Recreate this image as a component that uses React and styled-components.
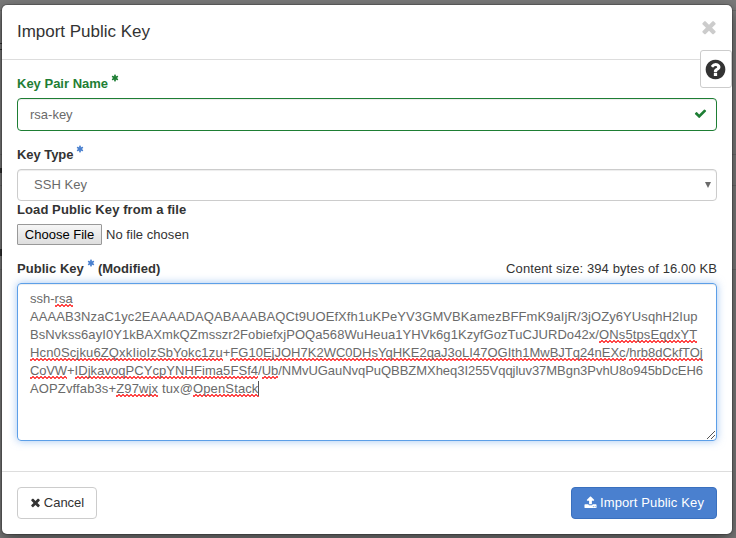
import React from "react";
import styled, { createGlobalStyle, css } from "styled-components";

const GlobalStyle = createGlobalStyle`
  * { box-sizing: border-box; }
  body {
    margin: 0;
    font: 13px/18px "Liberation Sans", Arial, sans-serif;
    color: #333;
    background: #7b7b7b;
    overflow: hidden;
  }
`;

const ICONS = {
  times: "M1490 1322q0 40-28 68l-136 136q-28 28-68 28t-68-28l-294-294-294 294q-28 28-68 28t-68-28l-136-136q-28-28-28-68t28-68l294-294-294-294q-28-28-28-68t28-68l136-136q28-28 68-28t68 28l294 294 294-294q28-28 68-28t68 28l136 136q28 28 28 68t-28 68l-294 294 294 294q28 28 28 68z",
  check: "M1671 566q0 40-28 68l-724 724-136 136q-28 28-68 28t-68-28l-136-136-362-362q-28-28-28-68t28-68l136-136q28-28 68-28t68 28l294 295 656-657q28-28 68-28t68 28l136 136q28 28 28 68z",
  help: "M1024 1376v-192q0-14-9-23t-23-9h-192q-14 0-23 9t-9 23v192q0 14 9 23t23 9h192q14 0 23-9t9-23zm256-672q0-88-55.5-163t-138.5-116-170-41q-243 0-371 213-15 24 8 42l132 100q7 6 19 6 16 0 25-12 53-68 86-92 34-24 86-24 48 0 85.5 26t37.5 59q0 38-20 61t-68 45q-63 28-115.5 86.5t-52.5 125.5v36q0 14 9 23t23 9h192q14 0 23-9t9-23q0-19 21.5-49.5t54.5-49.5q32-18 49-28.5t46-35 44.5-48 28-60.5 12.5-81zm384 192q0 209-103 385.5t-279.5 279.5-385.5 103-385.5-103-279.5-279.5-103-385.5 103-385.5 279.5-279.5 385.5-103 385.5 103 279.5 279.5 103 385.5z",
  upload: "M1344 1472q0-26-19-45t-45-19-45 19-19 45 19 45 45 19 45-19 19-45zm256 0q0-26-19-45t-45-19-45 19-19 45 19 45 45 19 45-19 19-45zm128-224v320q0 40-28 68t-68 28h-1472q-40 0-68-28t-28-68v-320q0-40 28-68t68-28h427q21 56 70.5 92t110.5 36h256q61 0 110.5-36t70.5-92h427q40 0 68 28t28 68zm-325-648q-17 40-59 40h-256v448q0 26-19 45t-45 19h-256q-26 0-45-19t-19-45v-448h-256q-42 0-59-40-17-39 14-69l448-448q18-19 45-19t45 19l448 448q31 30 14 69z",
  asterisk: "M1546 1050q46 26 59.5 77.5t-12.5 97.5l-64 110q-26 46-77.5 59.5t-97.5-12.5l-266-153v307q0 52-38 90t-90 38h-128q-52 0-90-38t-38-90v-307l-266 153q-46 26-97.5 12.5t-77.5-59.5l-64-110q-26-46-12.5-97.5t59.5-77.5l266-154-266-154q-46-26-59.5-77.5t12.5-97.5l64-110q26-46 77.5-59.5t97.5 12.5l266 153v-307q0-52 38-90t90-38h128q52 0 90 38t38 90v307l266-153q46-26 97.5-12.5t77.5 59.5l64 110q26 46 12.5 97.5t-59.5 77.5l-266 154z",
};

const Svg = styled.svg`
  display: block;
  flex: none;
  fill: currentColor;
`;
const Icon = ({ name, size }) => (
  <Svg width={size} height={size} viewBox="0 0 1792 1792"><path d={ICONS[name]} /></Svg>
);

const Page = styled.div`
  position: relative;
  height: 538px;
  padding: 5px 4px 4px 2px;
`;
const TableRule = styled.i`
  position: absolute;
  left: 0;
  right: 0;
  top: ${(p) => p.$y}px;
  height: 1px;
  background: #6c6c6c;
`;
const TextEdge = styled.i`
  position: absolute;
  left: 0;
  top: ${(p) => p.$y}px;
  width: 2px;
  height: ${(p) => p.$h}px;
  background: #333;
`;
const Modal = styled.main`
  position: relative;
  display: flex;
  flex-direction: column;
  height: 529px;
  background: #fff;
  border-radius: 5px;
  box-shadow: 0 0 0 1px rgba(0, 0, 0, 0.2), 0 5px 15px rgba(0, 0, 0, 0.5);
`;
const Header = styled.header`
  display: flex;
  justify-content: space-between;
  height: 55px;
  padding: 15px 13px 0 15px;
  border-bottom: 1px solid #ddd;
`;
const Title = styled.h1`
  margin: 0;
  font-size: 17px;
  line-height: 23px;
  font-weight: 400;
  letter-spacing: -0.02px;
`;
const CloseButton = styled.button`
  align-self: flex-start;
  margin-top: -3px;
  padding: 0;
  border: 0;
  background: none;
  color: #ccc;
`;
const HelpButton = styled.button`
  position: absolute;
  top: 45px;
  right: 0;
  display: flex;
  align-items: center;
  justify-content: center;
  width: 32px;
  height: 38px;
  padding: 0 1px 0 0;
  border: 1px solid #ccc;
  border-radius: 3px;
  background: #fff;
  color: #333;
`;
const Body = styled.div`
  display: flex;
  flex-direction: column;
  flex: 1;
  padding: 15px 15px 0;
`;
const LabelRow = styled.div`
  display: flex;
  justify-content: space-between;
  height: 18px;
  margin-top: ${(p) => p.$gap || 0}px;
`;
const Label = styled.label`
  display: flex;
  gap: 3px;
  font-weight: 700;
  letter-spacing: ${(p) => p.$track || 0}px;
  color: ${(p) => (p.$valid ? "#1e7e34" : "#333")};
`;
const Required = styled.span`
  height: 8px;
  margin-top: -1px;
  color: ${(p) => (p.$valid ? "inherit" : "#4a80cf")};
`;
const ContentSize = styled.span`
  letter-spacing: 0.1px;
`;
const field = css`
  display: flex;
  align-items: center;
  justify-content: space-between;
  border: 1px solid ${(p) => (p.$valid ? "#1e7e34" : "#ccc")};
  border-radius: 4px;
  background: #fff;
  box-shadow: inset 0 1px 1px rgba(0, 0, 0, 0.075);
  color: #6a6a6a;
`;
const Input = styled.div`
  ${field}
  height: 33px;
  margin-top: 5px;
  padding: 0 9px 0 12px;
  svg { color: #1e7e34; margin-top: -2px; }
`;
const Select = styled.div`
  ${field}
  height: 32px;
  margin-top: 5px;
  padding: 0 5px 1px 16px;
  letter-spacing: 0.06px;
`;
const FileRow = styled.div`
  display: flex;
  align-items: center;
  gap: 4px;
  height: 21px;
  margin-top: 5px;
  letter-spacing: 0.04px;
`;
const FileButton = styled.button`
  width: 85px;
  height: 21px;
  padding: 0;
  border: 1px solid #999;
  border-radius: 1px;
  background: linear-gradient(#f6f6f6, #dedede);
  color: #000;
  font: inherit;
  line-height: 18px;
`;
const KeyArea = styled.div`
  position: relative;
  height: 158px;
  margin-top: 5px;
  padding: 6px 12px;
  border: 1px solid #5c9fe8;
  border-radius: 4px;
  box-shadow: inset 0 1px 1px rgba(0, 0, 0, 0.075), 0 0 8px rgba(102, 160, 233, 0.6);
  color: #6a6a6a;
  white-space: nowrap;
`;
const Line = styled.div`
  height: 18px;
  letter-spacing: ${(p) => p.$track || 0}px;
`;
const Misspelt = styled.span`
  padding-bottom: 1px;
  letter-spacing: ${(p) => (p.$track === undefined ? "inherit" : `${p.$track}px`)};
  background:
    linear-gradient(135deg, transparent 42%, #ff4a4a 42% 60%, transparent 60%) 0 100% / 4px 3px repeat-x,
    linear-gradient(45deg, transparent 42%, #ff4a4a 42% 60%, transparent 60%) 2px 100% / 4px 3px repeat-x;
`;
const Caret = styled.span`
  display: inline-block;
  width: 1px;
  height: 15px;
  margin-left: -1px;
  vertical-align: -3px;
  background: #555;
`;
const Grip = styled(Svg)`
  position: absolute;
  right: 1px;
  bottom: 1px;
`;
const Footer = styled.footer`
  display: flex;
  justify-content: space-between;
  height: 63px;
  padding: 15px 15px 0;
  border-top: 1px solid #ddd;
`;
const Button = styled.button`
  display: flex;
  align-items: center;
  justify-content: center;
  gap: ${(p) => (p.$primary ? 3 : 2)}px;
  width: ${(p) => (p.$primary ? 146 : 80)}px;
  height: 32px;
  padding: 0 ${(p) => (p.$primary ? 0 : 1)}px 1px 0;
  border: 1px solid ${(p) => (p.$primary ? "#3a70be" : "#ccc")};
  border-radius: 4px;
  background: ${(p) => (p.$primary ? "#4a80cf" : "#fff")};
  color: ${(p) => (p.$primary ? "#fff" : "#333")};
  font: inherit;
  letter-spacing: ${(p) => (p.$primary ? 0.13 : 0)}px;
`;

export default function App() {
  return (
    <>
      <GlobalStyle />
      <Page>
        {[10, 154, 185, 269].map((y) => <TableRule key={y} $y={y} />)}
        <TextEdge $y={43} $h={1} /><TextEdge $y={49} $h={1} />
        <TextEdge $y={168} $h={5} /><TextEdge $y={249} $h={7} />
        <Modal>
          <Header>
            <Title>Import Public Key</Title>
            <CloseButton aria-label="Close"><Icon name="times" size={20} /></CloseButton>
          </Header>
          <HelpButton aria-label="Help"><Icon name="help" size={23} /></HelpButton>
          <Body>
            <LabelRow>
              <Label $valid>Key Pair Name<Required $valid><Icon name="asterisk" size={8} /></Required></Label>
            </LabelRow>
            <Input $valid>rsa-key<Icon name="check" size={13} /></Input>
            <LabelRow $gap={15}>
              <Label $track={-0.05}>Key Type<Required><Icon name="asterisk" size={8} /></Required></Label>
            </LabelRow>
            <Select>
              SSH Key
              <Svg width="6" height="6" viewBox="0 0 6 6"><path d="M0 0h6L3 6z" /></Svg>
            </Select>
            <LabelRow><Label $track={0.09}>Load Public Key from a file</Label></LabelRow>
            <FileRow><FileButton>Choose File</FileButton>No file chosen</FileRow>
            <LabelRow $gap={15}>
              <Label $track={0.04}>Public Key<Required><Icon name="asterisk" size={8} /></Required>(Modified)</Label>
              <ContentSize>Content size: 394 bytes of 16.00 KB</ContentSize>
            </LabelRow>
            <KeyArea>
              <Line>ssh-<Misspelt>rsa</Misspelt></Line>
              <Line $track={0.087}>AAAAB3NzaC1yc2EAAAADAQABAAABAQCt9UOEfXfh1uKPeYV3GMVBKamezBFFmK9aIjR/3jOZy6YUsqhH2Iup</Line>
              <Line $track={0.072}>BsNvkss6ayI0Y1kBAXmkQZmsszr2FobiefxjPOQa568WuHeua1YHVk6g1KzyfGozTuCJURDo42x/<Misspelt $track={0.12}>ONs5tpsEqdxYT</Misspelt></Line>
              <Line><Misspelt $track={0.14}>Hcn0Scjku6ZQxkIioIzSbYokc1zu</Misspelt>+<Misspelt $track={0.01}>FG10EjJOH7K2WC0DHsYqHKE2qaJ3oLI47OGIth1MwBJTq24nEXc</Misspelt>/<Misspelt>hrb8dCkfTOj</Misspelt></Line>
              <Line $track={-0.04}><Misspelt $track={-0.15}>CoVW</Misspelt>+<Misspelt $track={0.06}>IDjkavoqPCYcpYNHFima5FSf4</Misspelt>/<Misspelt>Ub</Misspelt>/NMvUGauNvqPuQBBZMXheq3I255Vqqjluv37MBgn3PvhU8o945bDcEH6</Line>
              <Line $track={0.13}>AOPZvffab3s+<Misspelt>Z97wjx</Misspelt> tux@<Misspelt>OpenStack</Misspelt><Caret /></Line>
              <Grip width="8" height="8" viewBox="0 0 8 8">
                <path d="M0 8L8 0M4 8L8 4" stroke="#555" strokeWidth="1" />
              </Grip>
            </KeyArea>
          </Body>
          <Footer>
            <Button><Icon name="times" size={13} />Cancel</Button>
            <Button $primary><Icon name="upload" size={13} />Import Public Key</Button>
          </Footer>
        </Modal>
      </Page>
    </>
  );
}
